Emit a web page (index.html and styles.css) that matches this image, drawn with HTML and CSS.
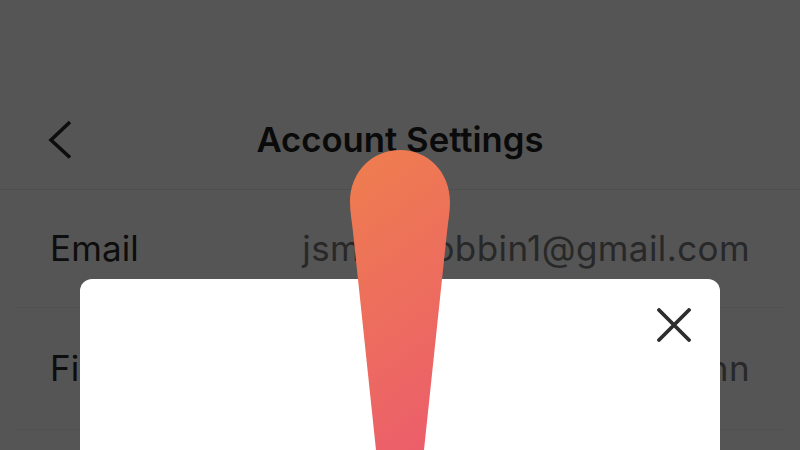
FILE: index.html
```
<!DOCTYPE html>
<html lang="en">
<head>
<meta charset="utf-8">
<title>Account Settings</title>
<link rel="stylesheet" href="styles.css">
</head>
<body>
<main class="screen">
  <header class="header">
    <svg class="back" viewBox="0 0 24 40" width="24" height="40" aria-hidden="true"><path d="M22 3 3 21 22 38.5"/></svg>
    <h1 class="title">Account Settings</h1>
  </header>
  <section class="rows">
    <div class="row"><span class="label">Email</span><span class="value">jsmith_robbin1@gmail.com</span></div>
    <div class="row"><span class="label">First Name</span><span class="value">John</span></div>
  </section>
  <div class="modal">
    <svg class="close" viewBox="0 0 34 34" width="34" height="34" aria-hidden="true"><path d="M2 2 32 32M32 2 2 32"/></svg>
  </div>
  <svg class="drop" viewBox="0 0 100 300" width="100" height="300" aria-hidden="true">
    <defs>
      <linearGradient id="dropFill" x1="0.35" y1="0" x2="0.6" y2="1">
        <stop offset="0" stop-color="#ee7c50"/>
        <stop offset="1" stop-color="#ec5f6a"/>
      </linearGradient>
    </defs>
    <path fill="url(#dropFill)" d="M0 52C0 22 22 0 50 0S100 22 100 52C100 62 98 72 97 82L74 300H26L3 82C2 72 0 62 0 52Z"/>
  </svg>
</main>
</body>
</html>
```
FILE: styles.css
```
* { box-sizing: border-box; }
html, body { margin: 0; padding: 0; }
body { width: 800px; height: 450px; overflow: hidden; background: #555555; font-family: "Inter", "Liberation Sans", sans-serif; }
.screen { position: relative; width: 800px; height: 450px; overflow: hidden; }
.header { height: 190px; padding: 120px 50px 0; position: relative; display: flex; justify-content: center; align-items: flex-start; border-bottom: 1px solid #4e4e4e; }
.back { position: absolute; left: 48px; top: 119px; fill: none; stroke: #0d0d0d; stroke-width: 3.6; }
.title { margin: 0; font-size: 34.7px; line-height: 38px; font-weight: 600; color: #0a0a0a; }
.rows { padding: 0 16px; }
.row { height: 118px; padding: 38px 34px 0; display: flex; justify-content: space-between; align-items: flex-start; border-bottom: 1px solid #515151; font-size: 35px; line-height: 40px; font-weight: 400; letter-spacing: 0.1px; }
.row + .row { height: 122px; padding-top: 40px; }
.label { color: #0d0d0d; }
.value { color: #282828; letter-spacing: 0.4px; }
.modal { position: absolute; left: 80px; top: 279px; width: 640px; height: 220px; background: #ffffff; border-radius: 12px; }
.close { position: absolute; left: 577px; top: 29px; fill: none; stroke: #2d2d2d; stroke-width: 3.8; stroke-linecap: round; }
.drop { position: absolute; left: 350px; top: 150px; }
```
